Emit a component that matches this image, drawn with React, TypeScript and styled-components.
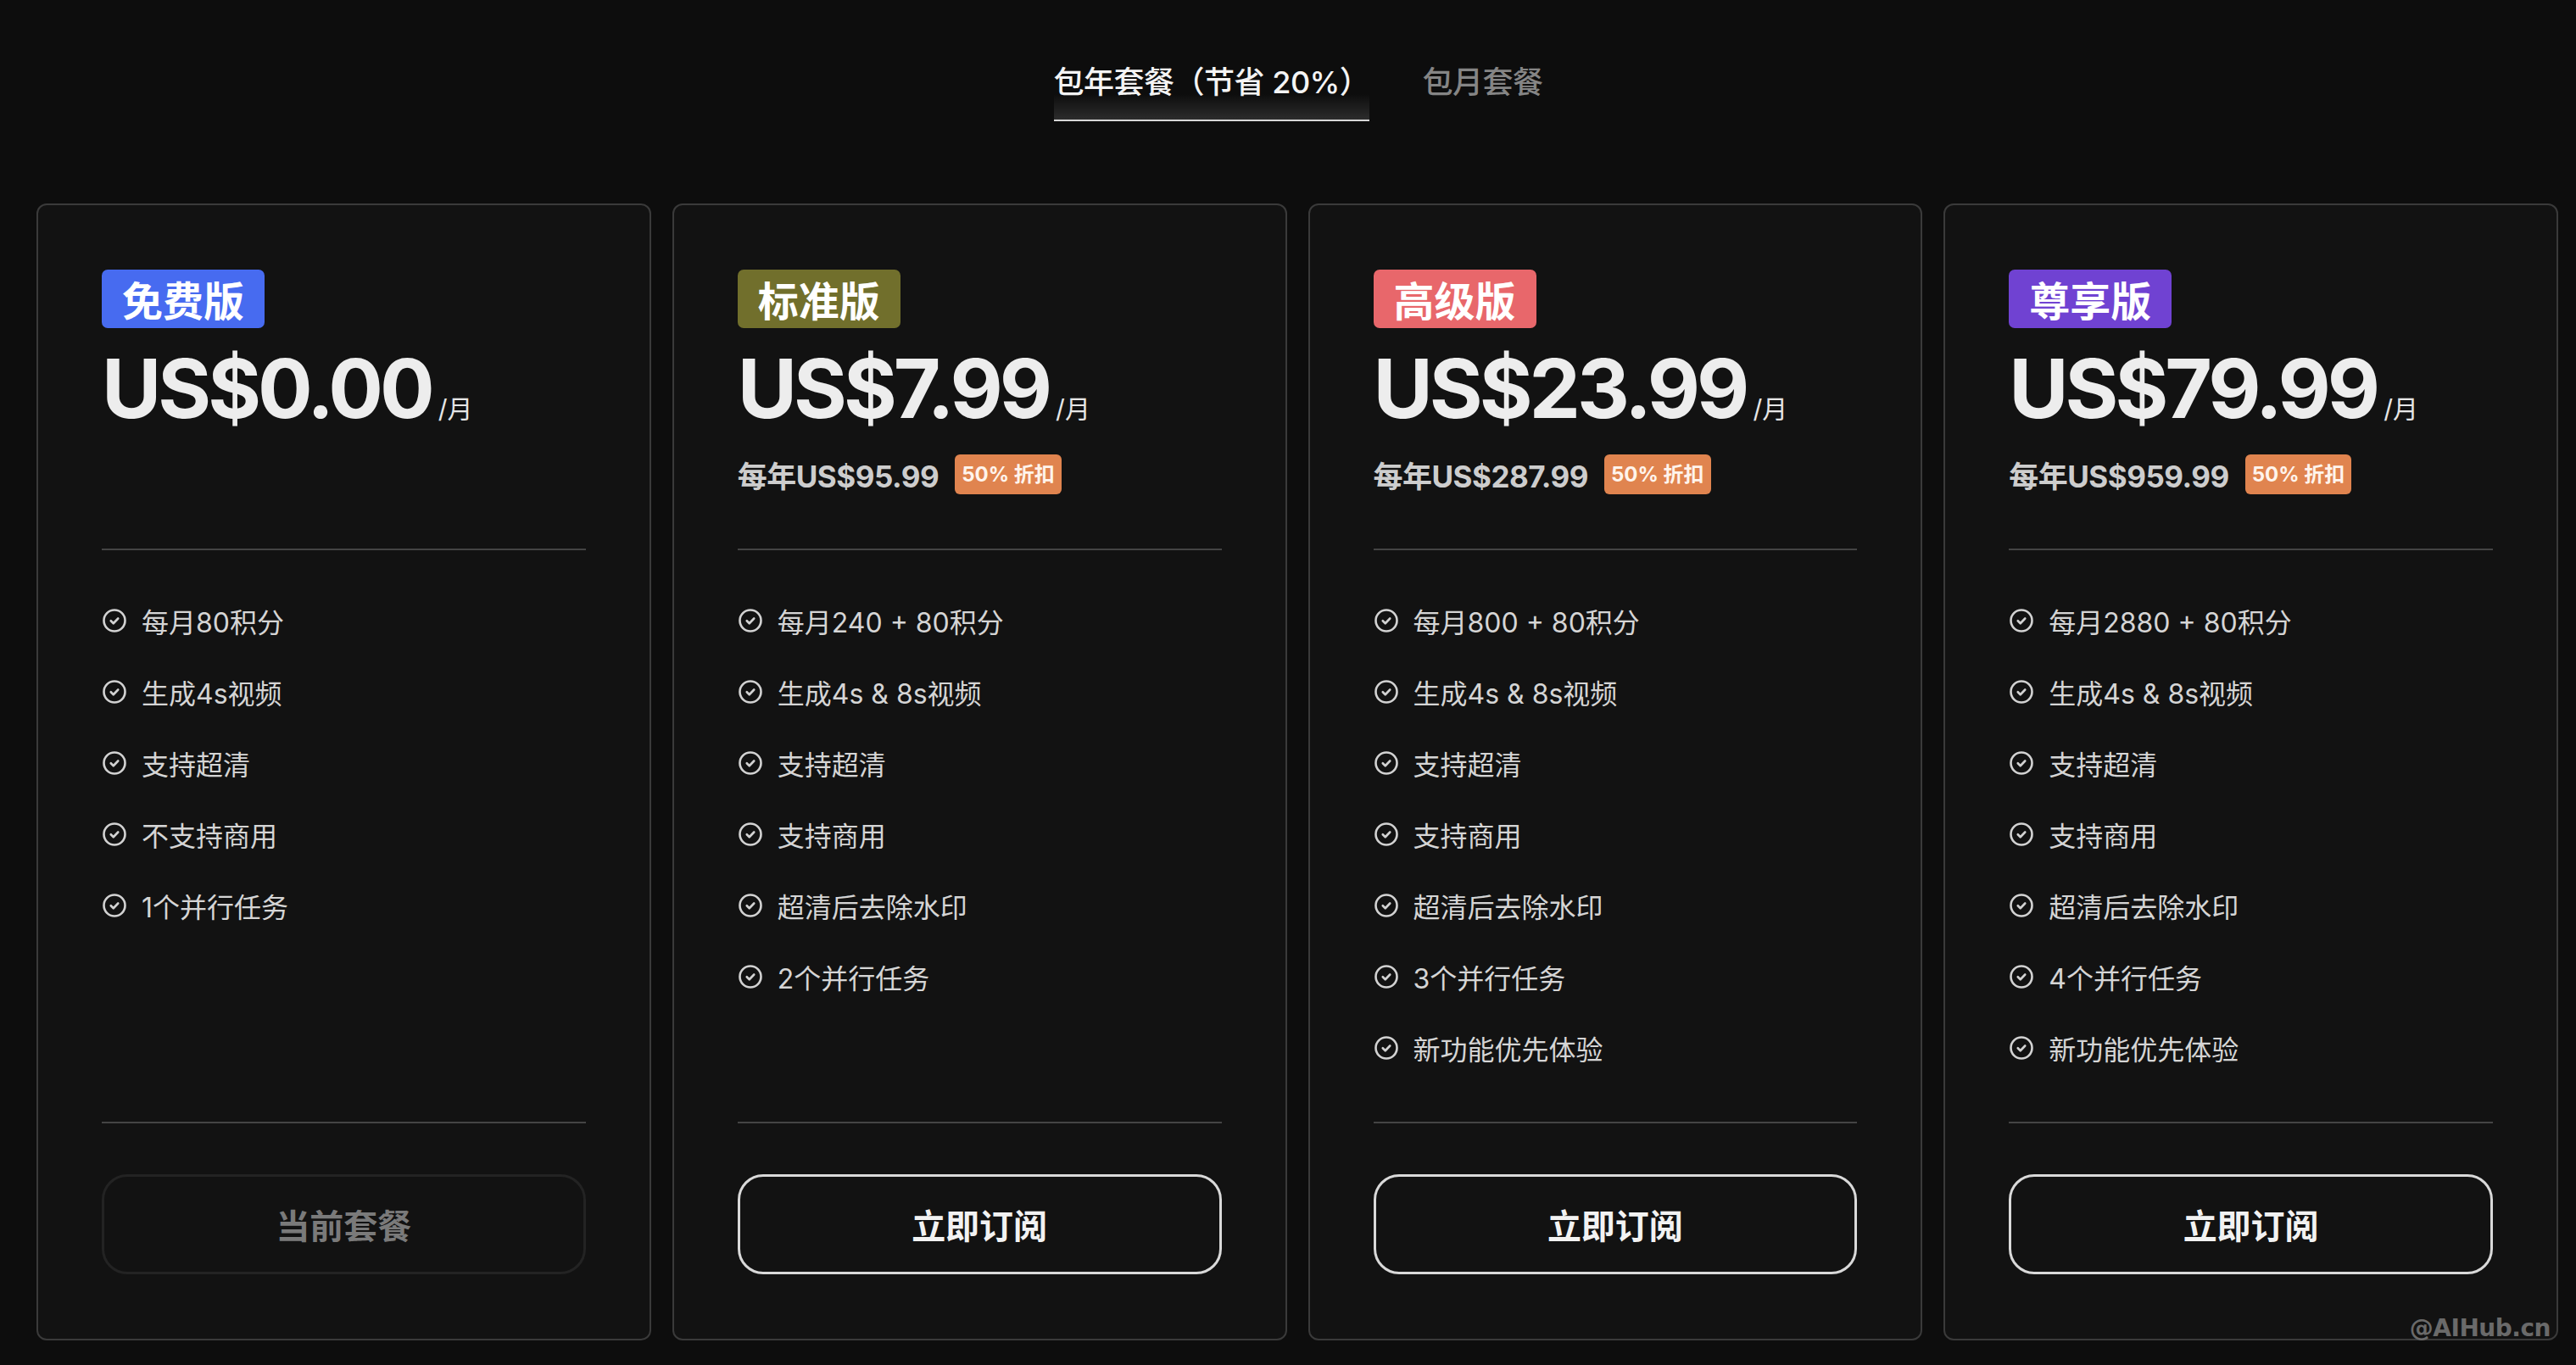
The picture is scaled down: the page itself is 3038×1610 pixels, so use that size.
import React from "react";
import styled, { createGlobalStyle, css } from "styled-components";

const GlobalStyle = createGlobalStyle`
  html, body { margin: 0; padding: 0; background: #0d0d0d; }
  body { font-family: "Inter", "Noto Sans CJK SC", sans-serif; }
  * { box-sizing: border-box; }
`;

const Page = styled.div`
  position: relative;
  width: 3038px;
  height: 1610px;
  background: #0d0d0d;
  padding: 72px 21px 0 43px;
  font-family: "Inter", "Noto Sans CJK SC", sans-serif;
  overflow: hidden;
`;

const Tabs = styled.div`
  display: flex;
  justify-content: center;
  gap: 62px;
  padding-left: 2px;
`;

const Tab = styled.div<{ $active?: boolean }>`
  position: relative;
  font-size: 36px;
  line-height: 50px;
  font-weight: 500;
  letter-spacing: -0.5px;
  padding-bottom: 19px;
  color: ${(p) => (p.$active ? "#f4f4f4" : "#858585")};
  white-space: pre;
  ${(p) =>
    p.$active &&
    css`
      border-bottom: 2px solid #d6d6d6;
      &::before {
        content: "";
        position: absolute;
        left: 0;
        right: 0;
        bottom: 0;
        height: 30px;
        background: linear-gradient(to top, rgba(255, 255, 255, 0.13), rgba(255, 255, 255, 0));
      }
    `}
`;

const Grid = styled.div`
  margin-top: 97px;
  display: grid;
  grid-template-columns: repeat(4, 1fr);
  gap: 25px;
`;

const Card = styled.div`
  display: flex;
  flex-direction: column;
  background: #121212;
  border: 2px solid #3a3a3a;
  border-radius: 12px;
  padding: 76px 75px 76px 75px;
`;

const Badge = styled.div<{ $bg: string }>`
  align-self: flex-start;
  height: 69px;
  line-height: 69px;
  padding: 0 24px;
  border-radius: 7px;
  background: ${(p) => p.$bg};
  color: #ffffff;
  font-size: 48px;
  font-weight: 700;
  font-family: "Noto Sans CJK SC", sans-serif;
`;

const PriceRow = styled.div`
  margin-top: 23px;
  display: flex;
  align-items: baseline;
  height: 96px;
`;

const Price = styled.span`
  font-size: 96px;
  line-height: 96px;
  font-weight: 700;
  color: #ededed;
  letter-spacing: -4px;
`;

const Per = styled.span`
  margin-left: 8px;
  font-size: 30px;
  font-weight: 400;
  color: #e6e6e6;
`;

const SubRow = styled.div`
  margin-top: 30px;
  height: 47px;
  display: flex;
  align-items: center;
  gap: 19px;
`;

const Yearly = styled.span`
  font-size: 35px;
  font-weight: 700;
  color: #cdcdcd;
  letter-spacing: -0.5px;
`;

const Discount = styled.span`
  height: 47px;
  line-height: 47px;
  padding: 0 8px;
  border-radius: 6px;
  background: #e0844f;
  color: #fff4ec;
  font-size: 24px;
  font-weight: 700;
`;

const Divider = styled.div`
  height: 2px;
  background: #444444;
`;

const TopDivider = styled(Divider)`
  margin-top: 64px;
`;

const Features = styled.ul`
  list-style: none;
  margin: 0;
  padding: 41px 0 45px;
  flex: 1;
  display: flex;
  flex-direction: column;
`;

const Feature = styled.li`
  height: 84px;
  display: flex;
  align-items: center;
  gap: 17px;
  font-size: 32px;
  color: #d5d5d5;
`;

const CheckIcon = styled.svg`
  width: 30px;
  height: 30px;
  flex-shrink: 0;
  color: #d2d2d2;
`;

const Button = styled.button<{ $disabled?: boolean }>`
  margin-top: 60px;
  height: 118px;
  width: 100%;
  border-radius: 30px;
  background: transparent;
  font-family: "Noto Sans CJK SC", sans-serif;
  font-size: 40px;
  font-weight: 700;
  cursor: pointer;
  border: 3px solid ${(p) => (p.$disabled ? "#232323" : "#d9d9d9")};
  color: ${(p) => (p.$disabled ? "#7a7a7a" : "#f2f2f2")};
`;

const Watermark = styled.div`
  position: absolute;
  right: 30px;
  bottom: 27px;
  font-family: "DejaVu Sans", sans-serif;
  font-weight: 700;
  font-size: 28px;
  color: #6a6a6a;
  letter-spacing: -0.5px;
`;

type Plan = {
  name: string;
  color: string;
  price: string;
  yearly?: string;
  features: string[];
  current?: boolean;
};

const plans: Plan[] = [
  {
    name: "免费版",
    color: "#476bf0",
    price: "US$0.00",
    features: ["每月80积分", "生成4s视频", "支持超清", "不支持商用", "1个并行任务"],
    current: true,
  },
  {
    name: "标准版",
    color: "#716f2c",
    price: "US$7.99",
    yearly: "每年US$95.99",
    features: ["每月240 + 80积分", "生成4s & 8s视频", "支持超清", "支持商用", "超清后去除水印", "2个并行任务"],
  },
  {
    name: "高级版",
    color: "#e8676b",
    price: "US$23.99",
    yearly: "每年US$287.99",
    features: ["每月800 + 80积分", "生成4s & 8s视频", "支持超清", "支持商用", "超清后去除水印", "3个并行任务", "新功能优先体验"],
  },
  {
    name: "尊享版",
    color: "#7042d2",
    price: "US$79.99",
    yearly: "每年US$959.99",
    features: ["每月2880 + 80积分", "生成4s & 8s视频", "支持超清", "支持商用", "超清后去除水印", "4个并行任务", "新功能优先体验"],
  },
];

const Check = () => (
  <CheckIcon viewBox="0 0 24 24" fill="none" stroke="currentColor" strokeWidth={2.1} strokeLinecap="round" strokeLinejoin="round">
    <circle cx="12" cy="12" r="10" />
    <path d="m8.6 12.2 2.4 2.4 4.4-4.6" />
  </CheckIcon>
);

export default function App() {
  return (
    <Page>
      <GlobalStyle />
      <Tabs>
        <Tab $active>包年套餐（节省 20%）</Tab>
        <Tab>包月套餐</Tab>
      </Tabs>
      <Grid>
        {plans.map((p) => (
          <Card key={p.name}>
            <Badge $bg={p.color}>{p.name}</Badge>
            <PriceRow>
              <Price>{p.price}</Price>
              <Per>/月</Per>
            </PriceRow>
            <SubRow>
              {p.yearly && (
                <>
                  <Yearly>{p.yearly}</Yearly>
                  <Discount>50% 折扣</Discount>
                </>
              )}
            </SubRow>
            <TopDivider />
            <Features>
              {p.features.map((f) => (
                <Feature key={f}>
                  <Check />
                  {f}
                </Feature>
              ))}
            </Features>
            <Divider />
            <Button $disabled={p.current}>{p.current ? "当前套餐" : "立即订阅"}</Button>
          </Card>
        ))}
      </Grid>
      <Watermark>@AIHub.cn</Watermark>
    </Page>
  );
}
